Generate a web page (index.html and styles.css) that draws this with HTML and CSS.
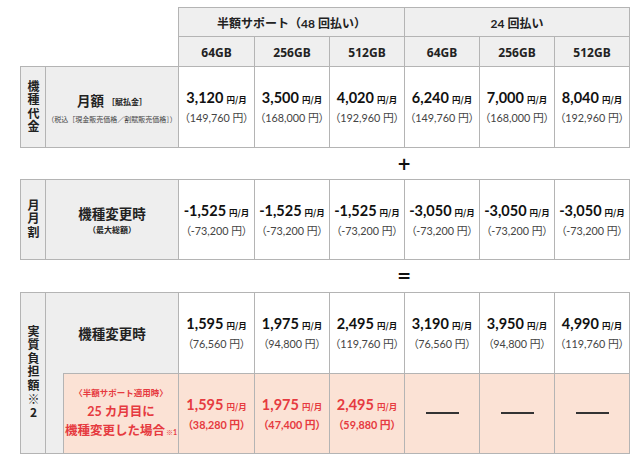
FILE: index.html
```html
<!DOCTYPE html>
<html lang="ja">
<head>
<meta charset="utf-8">
<title>料金表</title>
<link rel="stylesheet" href="styles.css">
</head>
<body>
<div class="page">
  <div class="head">
    <div class="hc hc-group">半額サポート（48 回払い）</div>
    <div class="hc hc-group">24 回払い</div>
    <div class="hc">64GB</div>
    <div class="hc">256GB</div>
    <div class="hc">512GB</div>
    <div class="hc">64GB</div>
    <div class="hc">256GB</div>
    <div class="hc">512GB</div>
  </div>

  <div class="sec sec-one">
    <div class="lab"><span class="vt">機種代金</span></div>
    <div class="name span-name">
      <div class="name-main">月額<span class="tag">［賦払金］</span></div>
      <div class="note">（税込［現金販売価格／割賦販売価格］）</div>
    </div>
    <div class="cell"><div class="price">3,120<span class="unit">円/月</span></div><div class="total">（149,760 円）</div></div>
    <div class="cell"><div class="price">3,500<span class="unit">円/月</span></div><div class="total">（168,000 円）</div></div>
    <div class="cell"><div class="price">4,020<span class="unit">円/月</span></div><div class="total">（192,960 円）</div></div>
    <div class="cell"><div class="price">6,240<span class="unit">円/月</span></div><div class="total">（149,760 円）</div></div>
    <div class="cell"><div class="price">7,000<span class="unit">円/月</span></div><div class="total">（168,000 円）</div></div>
    <div class="cell"><div class="price">8,040<span class="unit">円/月</span></div><div class="total">（192,960 円）</div></div>
  </div>

  <div class="op">+</div>

  <div class="sec sec-two">
    <div class="lab"><span class="vt">月月割</span></div>
    <div class="name span-name">
      <div class="name-main">機種変更時</div>
      <div class="sub-note">（最大総額）</div>
    </div>
    <div class="cell"><div class="price">-1,525<span class="unit">円/月</span></div><div class="total">（-73,200 円）</div></div>
    <div class="cell"><div class="price">-1,525<span class="unit">円/月</span></div><div class="total">（-73,200 円）</div></div>
    <div class="cell"><div class="price">-1,525<span class="unit">円/月</span></div><div class="total">（-73,200 円）</div></div>
    <div class="cell"><div class="price">-3,050<span class="unit">円/月</span></div><div class="total">（-73,200 円）</div></div>
    <div class="cell"><div class="price">-3,050<span class="unit">円/月</span></div><div class="total">（-73,200 円）</div></div>
    <div class="cell"><div class="price">-3,050<span class="unit">円/月</span></div><div class="total">（-73,200 円）</div></div>
  </div>

  <div class="op">=</div>

  <div class="sec sec-three">
    <div class="lab lab-tall"><span class="vt">実質負担額※2</span></div>
    <div class="name span-name">
      <div class="name-main">機種変更時</div>
    </div>
    <div class="cell"><div class="price">1,595<span class="unit">円/月</span></div><div class="total">（76,560 円）</div></div>
    <div class="cell"><div class="price">1,975<span class="unit">円/月</span></div><div class="total">（94,800 円）</div></div>
    <div class="cell"><div class="price">2,495<span class="unit">円/月</span></div><div class="total">（119,760 円）</div></div>
    <div class="cell"><div class="price">3,190<span class="unit">円/月</span></div><div class="total">（76,560 円）</div></div>
    <div class="cell"><div class="price">3,950<span class="unit">円/月</span></div><div class="total">（94,800 円）</div></div>
    <div class="cell"><div class="price">4,990<span class="unit">円/月</span></div><div class="total">（119,760 円）</div></div>

    <div class="strip"></div>
    <div class="pink pink-name">
      <div class="pn-small">〈半額サポート適用時〉</div>
      <div class="pn-big">25 カ月目に</div>
      <div class="pn-big">機種変更した場合<span class="pn-mark">※1</span></div>
    </div>
    <div class="cell pink"><div class="price red">1,595<span class="unit">円/月</span></div><div class="total red-total">（38,280 円）</div></div>
    <div class="cell pink"><div class="price red">1,975<span class="unit">円/月</span></div><div class="total red-total">（47,400 円）</div></div>
    <div class="cell pink"><div class="price red">2,495<span class="unit">円/月</span></div><div class="total red-total">（59,880 円）</div></div>
    <div class="cell pink"><div class="dash"></div></div>
    <div class="cell pink"><div class="dash"></div></div>
    <div class="cell pink"><div class="dash"></div></div>
  </div>
</div>
</body>
</html>
```

FILE: styles.css
```css
* { box-sizing: border-box; }

html, body {
  margin: 0;
  padding: 0;
  background: #ffffff;
}

body {
  font-family: "Lato", "Noto Sans CJK JP", sans-serif;
  color: #1a1a1a;
}

.page {
  padding-top: 7px;
  width: 640px;
}

/* header */
.head {
  margin-left: 178px;
  width: fit-content;
  display: grid;
  grid-template-columns: 76px repeat(5, 75px);
  grid-template-rows: 29px 30px;
  border-right: 1px solid #b4b4b4;
}

.hc {
  border-left: 1px solid #b4b4b4;
  border-top: 1px solid #b4b4b4;
  background: #efefef;
  display: flex;
  align-items: center;
  justify-content: center;
  font-family: "Noto Sans", "Noto Sans CJK JP", sans-serif;
  font-weight: 700;
  font-size: 12px;
  color: #222;
  padding-top: 1px;
}

.hc-group {
  grid-column: span 3;
  font-family: "Lato", "Noto Sans CJK JP", sans-serif;
  font-size: 12px;
  font-weight: 700;
}

/* sections */
.sec {
  margin-left: 20px;
  width: fit-content;
  display: grid;
  grid-template-columns: 25px 18px 115px 76px repeat(5, 75px);
  border-right: 1px solid #b4b4b4;
  border-bottom: 1px solid #b4b4b4;
}

.sec-one { grid-template-rows: 81px; }
.sec-two { grid-template-rows: 80px; }
.sec-three { grid-template-rows: 81px 80px; margin-top: 1px; }

.sec > div {
  border-left: 1px solid #b4b4b4;
  border-top: 1px solid #b4b4b4;
}

.lab {
  background: #eeeeee;
  display: flex;
  align-items: center;
  justify-content: center;
}

.lab-tall {
  grid-row: span 2;
}

.vt {
  writing-mode: vertical-rl;
  text-orientation: upright;
  font-family: "Noto Sans CJK JP", sans-serif;
  font-weight: 700;
  font-size: 12px;
  letter-spacing: 1.6px;
  color: #222;
  line-height: 1;
}

.name {
  background: #eeeeee;
  display: flex;
  flex-direction: column;
  align-items: center;
  justify-content: center;
  font-family: "Noto Sans CJK JP", sans-serif;
  color: #222;
}

.span-name {
  grid-column: span 2;
}

.name-main {
  font-weight: 700;
  font-size: 13.5px;
  line-height: 18px;
}

.tag {
  font-size: 8px;
  margin-left: 3px;
  vertical-align: 1px;
}

.note {
  font-size: 7px;
  color: #444;
  margin-top: 4px;
  line-height: 9px;
  white-space: nowrap;
}

.sub-note {
  font-size: 8px;
  font-weight: 700;
  margin-top: 3px;
  line-height: 10px;
}

.strip {
  background: #eeeeee;
  border-top: none !important;
}

.cell {
  display: flex;
  flex-direction: column;
  align-items: center;
  justify-content: center;
}

.price {
  font-weight: 700;
  font-size: 14.5px;
  line-height: 18px;
  color: #111;
  white-space: nowrap;
}

.unit {
  font-family: "Noto Sans CJK JP", sans-serif;
  font-size: 8.5px;
  margin-left: 3px;
  font-weight: 700;
}

.total {
  font-size: 10.8px;
  color: #444;
  margin-top: 2px;
  line-height: 15px;
  font-feature-settings: "palt";
  white-space: nowrap;
}

.op {
  margin-left: 178px;
  width: 452px;
  height: 31px;
  display: flex;
  align-items: center;
  justify-content: center;
  font-family: "DejaVu Sans", sans-serif;
  font-weight: 700;
  font-size: 17px;
  color: #111;
}

/* pink row */
.pink {
  background: #fbe2d5;
}

.pink-name {
  display: flex;
  flex-direction: column;
  align-items: center;
  justify-content: center;
  color: #e63a40;
  font-family: "Lato", "Noto Sans CJK JP", sans-serif;
  font-weight: 700;
}

.pn-small {
  font-size: 8.5px;
  line-height: 14px;
  margin-bottom: 2px;
}

.pn-big {
  font-size: 12.5px;
  line-height: 19px;
  white-space: nowrap;
}

.pn-mark {
  font-size: 7px;
  margin-left: 1px;
}

.red {
  color: #e63a40;
}

.red-total {
  color: #e63a40;
  font-weight: 700;
}

.dash {
  width: 33px;
  height: 2px;
  background: #333;
  margin-top: -2px;
}
```
